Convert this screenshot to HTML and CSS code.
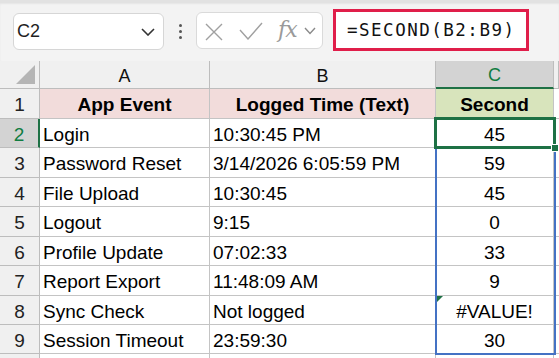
FILE: index.html
```html
<!DOCTYPE html>
<html>
<head>
<meta charset="utf-8">
<link rel="stylesheet" href="styles.css">
</head>
<body>
<div class="toolbar">
  <div class="namebox">
    <span class="nb-text">C2</span>
    <svg class="nb-chev" width="14" height="8" viewBox="0 0 14 8"><path d="M1 1 L7 7 L13 1" fill="none" stroke="#333" stroke-width="1.6"/></svg>
  </div>
  <div class="dots"><span></span><span></span><span></span></div>
  <div class="fxbox">
    <svg class="ic-x" width="18" height="18" viewBox="0 0 18 18"><path d="M1 1 L17 17 M17 1 L1 17" stroke="#a0a0a0" stroke-width="1.4" fill="none"/></svg>
    <svg class="ic-check" width="24" height="18" viewBox="0 0 24 18"><path d="M1 8 L9 17 L23 1" stroke="#a0a0a0" stroke-width="1.4" fill="none"/></svg>
    <span class="fx">fx</span>
    <svg class="ic-chev" width="12" height="8" viewBox="0 0 12 8"><path d="M1 1 L6 6.5 L11 1" fill="none" stroke="#8a8a8a" stroke-width="1.4"/></svg>
  </div>
  <div class="formula">=SECOND(B2:B9)</div>
</div>

<div class="sheet">
  <div class="grid">
    <div class="corner"><span class="tri"></span></div>
    <div class="ch">A</div>
    <div class="ch">B</div>
    <div class="ch ch-sel">C</div>
    <div class="ch-rest"></div>

    <div class="rh">1</div>
    <div class="c hdr-pink">App Event</div>
    <div class="c hdr-pink">Logged Time (Text)</div>
    <div class="c hdr-green">Second</div>
    <div class="rest"></div>

    <div class="rh rh-sel">2</div>
    <div class="c">Login</div>
    <div class="c">10:30:45 PM</div>
    <div class="c num">45</div>
    <div class="rest"></div>

    <div class="rh">3</div>
    <div class="c">Password Reset</div>
    <div class="c">3/14/2026 6:05:59 PM</div>
    <div class="c num">59</div>
    <div class="rest"></div>

    <div class="rh">4</div>
    <div class="c">File Upload</div>
    <div class="c">10:30:45</div>
    <div class="c num">45</div>
    <div class="rest"></div>

    <div class="rh">5</div>
    <div class="c">Logout</div>
    <div class="c">9:15</div>
    <div class="c num">0</div>
    <div class="rest"></div>

    <div class="rh">6</div>
    <div class="c">Profile Update</div>
    <div class="c">07:02:33</div>
    <div class="c num">33</div>
    <div class="rest"></div>

    <div class="rh">7</div>
    <div class="c">Report Export</div>
    <div class="c">11:48:09 AM</div>
    <div class="c num">9</div>
    <div class="rest"></div>

    <div class="rh">8</div>
    <div class="c">Sync Check</div>
    <div class="c">Not logged</div>
    <div class="c num err">#VALUE!<span class="errtri"></span></div>
    <div class="rest"></div>

    <div class="rh">9</div>
    <div class="c">Session Timeout</div>
    <div class="c">23:59:30</div>
    <div class="c num">30</div>
    <div class="rest"></div>

    <div class="rh last"></div>
    <div class="c last"></div>
    <div class="c last"></div>
    <div class="c last"></div>
    <div class="rest last"></div>
  </div>
  <div class="range"></div>
  <div class="sel"><span class="handle"></span></div>
</div>
</body>
</html>
```

FILE: styles.css
```css
* { box-sizing: border-box; }
html, body { margin: 0; padding: 0; }
body {
  width: 559px;
  height: 358px;
  overflow: hidden;
  background: #ffffff;
  font-family: "Liberation Sans", Arial, sans-serif;
  color: #000;
}

.toolbar {
  height: 61px;
  background: #f3f3f3;
  display: flex;
  align-items: flex-start;
  padding-left: 13px;
  border-top: 3px solid #e2e2e2;
  box-shadow: inset 0 1px 2px rgba(0,0,0,0.06);
}

.namebox {
  margin-top: 10px;
  width: 151px;
  height: 37px;
  background: #fff;
  border: 1px solid #d6d6d6;
  border-radius: 6px;
  display: flex;
  align-items: center;
  justify-content: space-between;
  padding: 0 8px 0 3px;
}
.nb-text { font-size: 18px; color: #1f1f1f; }

.dots {
  width: 32px;
  height: 37px;
  margin-top: 10px;
  display: flex;
  flex-direction: column;
  align-items: center;
  justify-content: center;
  gap: 3px;
}
.dots span {
  width: 3px;
  height: 3px;
  border-radius: 50%;
  background: #555;
}

.fxbox {
  margin-top: 9px;
  width: 127px;
  height: 37px;
  background: #fff;
  border: 1px solid #dadada;
  border-radius: 6px;
  display: flex;
  align-items: center;
  padding-left: 8px;
}
.ic-x { margin-top: 2px; }
.ic-check { margin-left: 16px; margin-top: 1px; }
.fx {
  margin-left: 15px;
  font-family: "DejaVu Serif", "Liberation Serif", serif;
  font-style: italic;
  font-size: 22px;
  color: #9a9a9a;
  letter-spacing: -1px;
  margin-top: -3px;
}
.ic-chev { margin-left: 7px; }

.formula {
  margin-left: 10px;
  margin-top: 6px;
  width: 196px;
  height: 42px;
  background: #fff;
  border: 3px solid #e01e4a;
  font-family: "DejaVu Sans Mono", "Liberation Mono", monospace;
  font-size: 17.5px;
  letter-spacing: 1.5px;
  padding-left: 11px;
  line-height: 36px;
  color: #111;
}

.sheet { position: relative; }

.grid {
  display: grid;
  grid-template-columns: 40px 170px 226px 118px 5px;
  grid-template-rows: 28px 30px 29px 30px 29px 30px 29px 30px 29px 29px 10px;
}

.grid > div {
  border-right: 1px solid #c4c4c4;
  border-bottom: 1px solid #c4c4c4;
  font-size: 19px;
  display: flex;
  align-items: center;
  white-space: nowrap;
  overflow: hidden;
  padding-top: 3px;
}

.corner {
  background: #f0f0f0;
  position: relative;
  border-color: #bdbdbd !important;
}
.tri {
  position: absolute;
  right: 4px;
  bottom: 4px;
  width: 0;
  height: 0;
  border-left: 19px solid transparent;
  border-bottom: 19px solid #b5b5b5;
}

.ch, .ch-rest {
  background: #f0f0f0;
  justify-content: center;
  color: #111;
  border-color: #bdbdbd !important;
  font-size: 18px !important;
}
.ch-sel {
  background: #d3d3d3;
  color: #107c41;
  border-bottom: 2px solid #1e7145 !important;
}

.rh {
  background: #f0f0f0;
  justify-content: center;
  color: #222;
  border-color: #bdbdbd !important;
}
.rh-sel {
  background: #d3d3d3;
  color: #107c41;
  border-right: 2px solid #1e7145 !important;
}

.c { padding-left: 3px; background: #fff; }
.hdr-pink {
  background: #f2dcdb !important;
  font-weight: bold;
  justify-content: center;
  padding-left: 0;
}
.hdr-green {
  background: #d8e4bc !important;
  font-weight: bold;
  justify-content: center;
  padding-left: 0;
}
.num { justify-content: center; padding-left: 0 !important; }
.err { position: relative; }
.errtri {
  position: absolute;
  left: 1px;
  top: 0;
  width: 0;
  height: 0;
  border-top: 6px solid #1e7145;
  border-right: 6px solid transparent;
}
.last { border-bottom: none !important; }
.rest { background: #fff; border-right: none !important; }

.range {
  position: absolute;
  left: 435px;
  top: 57px;
  width: 121px;
  height: 237px;
  border: 2px solid #4472c4;
  pointer-events: none;
}

.sel {
  position: absolute;
  left: 434px;
  top: 56px;
  width: 122px;
  height: 32px;
  border: 3px solid #1e7145;
  pointer-events: none;
}
.handle {
  position: absolute;
  right: -6px;
  bottom: -6px;
  width: 8px;
  height: 8px;
  background: #1e7145;
  border: 1px solid #fff;
}
```
